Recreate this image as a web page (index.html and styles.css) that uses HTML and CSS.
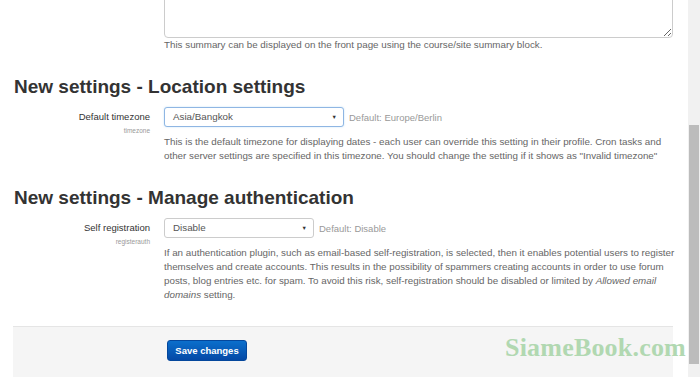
FILE: index.html
```html
<!DOCTYPE html>
<html lang="en">
<head>
  <meta charset="UTF-8">
  <title>Site administration - New settings</title>
  <link rel="stylesheet" href="styles.css">
</head>
<body>
  <div class="page">
    <!-- Front page summary (tail of the previous block) -->
    <div class="setting">
      <div class="label-col"></div>
      <div class="field-col">
        <textarea class="summary-box"></textarea>
        <div class="desc summary-note">This summary can be displayed on the front page using the course/site summary block.</div>
      </div>
    </div>

    <h2>New settings - Location settings</h2>
    <div class="setting">
      <div class="label-col">
        <label>Default timezone</label>
        <span class="setting-name">timezone</span>
      </div>
      <div class="field-col">
        <div class="field-row">
          <div class="select select-focused select-wide">Asia/Bangkok<span class="caret">&#9660;</span></div>
          <span class="default-value">Default: Europe/Berlin</span>
        </div>
        <div class="desc">This is the default timezone for displaying dates - each user can override this setting in their profile. Cron tasks and other server settings are specified in this timezone. You should change the setting if it shows as "Invalid timezone"</div>
      </div>
    </div>

    <h2>New settings - Manage authentication</h2>
    <div class="setting">
      <div class="label-col">
        <label>Self registration</label>
        <span class="setting-name">registerauth</span>
      </div>
      <div class="field-col">
        <div class="field-row">
          <div class="select select-narrow">Disable<span class="caret">&#9660;</span></div>
          <span class="default-value">Default: Disable</span>
        </div>
        <div class="desc">If an authentication plugin, such as email-based self-registration, is selected, then it enables potential users to register themselves and create accounts. This results in the possibility of spammers creating accounts in order to use forum posts, blog entries etc. for spam. To avoid this risk, self-registration should be disabled or limited by <em>Allowed email domains</em> setting.</div>
      </div>
    </div>

    <div class="form-footer">
      <button type="button">Save changes</button>
    </div>
  </div>

  <div class="scrollbar">
    <div class="scroll-thumb"></div>
  </div>

  <div class="watermark">SiameBook.com</div>
</body>
</html>
```

FILE: styles.css
```css
* {
  box-sizing: border-box;
}

body {
  margin: 0;
  height: 377px;
  overflow: hidden;
  display: flex;
  position: relative;
  background: #fff;
  font-family: "Liberation Sans", Arial, Helvetica, sans-serif;
  color: #333;
}

.page {
  flex: 1;
  margin-top: -12px;
  padding: 0 15px 0 13px;
}

/* Settings rows */
.setting {
  display: grid;
  grid-template-columns: 137px 1fr;
  column-gap: 14px;
}

.label-col {
  display: flex;
  flex-direction: column;
  align-items: flex-end;
  text-align: right;
}

.label-col label {
  font-size: 9.5px;
  line-height: 20px;
  color: #333;
}

.setting-name {
  font-size: 6.5px;
  line-height: 8px;
  color: #999;
}

.summary-box {
  display: block;
  width: 100%;
  height: 50px;
  margin: 0;
  border: 1px solid #ccc;
  border-radius: 4px;
  resize: both;
  background: #fff;
}

.desc {
  margin: 8px -8px 0 0;
  font-size: 9.8px;
  line-height: 14px;
  color: #666;
}

.summary-note {
  margin-top: 0;
}

h2 {
  margin: 23px 0 8px 1px;
  font-size: 19px;
  line-height: 24px;
  font-weight: bold;
  color: #333;
}

.field-row {
  display: flex;
  align-items: center;
  gap: 5px;
}

.select {
  position: relative;
  height: 20px;
  padding: 0 8px;
  border: 1px solid #ccc;
  border-radius: 3px;
  font-size: 9.8px;
  line-height: 18px;
  color: #555;
  background: #fff;
}

.select-focused {
  border-color: #8fb6e3;
  box-shadow: 0 0 2px rgba(82, 168, 236, 0.35);
}

.select-wide {
  width: 180px;
}

.select-narrow {
  width: 150px;
}

.caret {
  position: absolute;
  right: 6px;
  top: 0;
  font-size: 5.5px;
  color: #333;
}

.default-value {
  font-size: 9.5px;
  color: #999;
}

/* Footer with submit button */
.form-footer {
  margin-top: 24px;
  height: 60px;
  padding: 13px 0 0 154px;
  background: #f5f5f5;
  border-top: 1px solid #e5e5e5;
}

.form-footer button {
  width: 80px;
  height: 21px;
  padding: 0;
  border: 1px solid #04479c;
  border-radius: 3px;
  background: linear-gradient(#0b6fcc, #0449a6);
  color: #fff;
  font-family: "Liberation Sans", Arial, sans-serif;
  font-size: 9.5px;
  font-weight: bold;
}

/* Fake browser scrollbar */
.scrollbar {
  width: 12px;
  background: #f1f1f1;
  padding: 125px 1px 0 1px;
}

.scroll-thumb {
  height: 239px;
  background: #bcbcbc;
}

.watermark {
  position: absolute;
  left: 505px;
  top: 333px;
  font-family: "Liberation Serif", "Times New Roman", serif;
  font-size: 26px;
  font-weight: bold;
  color: #b1d8b1;
  letter-spacing: 0.2px;
}
```
